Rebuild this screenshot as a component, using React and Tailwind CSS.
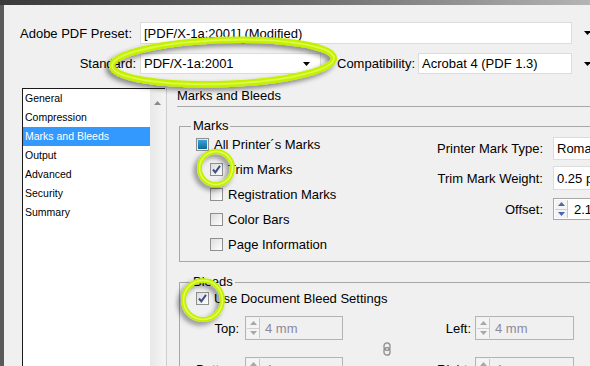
import React from "react";

const DownArrow = () => (
  <svg width="7" height="4" viewBox="0 0 7 4" className="shrink-0">
    <path d="M0 0h7L3.5 4z" fill="#000" />
  </svg>
);

const Check = ({ state }) => (
  <span className="flex h-[13px] w-[13px] shrink-0 items-center justify-center border border-[#8e8f8f] bg-gradient-to-br from-[#dcdcdc] to-white">
    {state === "checked" && (
      <svg width="11" height="11" viewBox="0 0 11 11">
        <path d="M2 5.5 L4.3 8.3 L9 1.8" fill="none" stroke="#3a4f86" strokeWidth="2" />
      </svg>
    )}
    {state === "mixed" && (
      <span className="h-[9px] w-[9px] bg-gradient-to-b from-[#3aa3d8] to-[#0f6a9c]" />
    )}
  </span>
);

const SpinButtons = ({ active }) => {
  const c = active ? "#4a66b0" : "#a8a8a8";
  return (
    <span className="flex h-full w-[13px] shrink-0 flex-col border-r border-[#c8c8c8] bg-[#f4f4f4]">
      <span className="flex flex-1 items-center justify-center border-b border-[#d0d0d0]">
        <svg width="7" height="4" viewBox="0 0 7 4">
          <path d="M0 4h7L3.5 0z" fill={c} />
        </svg>
      </span>
      <span className="flex flex-1 items-center justify-center">
        <svg width="7" height="4" viewBox="0 0 7 4">
          <path d="M0 0h7L3.5 4z" fill={c} />
        </svg>
      </span>
    </span>
  );
};

function BleedField({ label }) {
  return (
    <div className="flex h-[24px] items-center">
      <span className="w-[43px] text-right">{label}</span>
      <span className="ml-[6px] flex h-[24px] w-[98px] items-center border border-[#b4b4b4] bg-[#f0f0f0] p-px">
        <SpinButtons />
        <span className="pl-[5px] text-[#8a8a9c]">4 mm</span>
      </span>
    </div>
  );
}

function BleedFieldRight({ label }) {
  return (
    <div className="flex h-[24px] items-center">
      <span className="w-[48px] text-right">{label}</span>
      <span className="ml-[4px] flex h-[24px] w-[99px] items-center border border-[#b4b4b4] bg-[#f0f0f0] p-px">
        <SpinButtons />
        <span className="pl-[5px] text-[#8a8a9c]">4 mm</span>
      </span>
    </div>
  );
}

const SECTIONS = ["General", "Compression", "Marks and Bleeds", "Output", "Advanced", "Security", "Summary"];

export default function App() {
  return (
    <div className="relative h-[366px] w-[590px] overflow-hidden bg-[#f0f0f0] font-['Liberation_Sans',Arial,sans-serif] text-[13px] leading-[15px] text-black">
      <div className="h-[5px] bg-gradient-to-r from-[#3a3a3a] via-[#6a6a6a] to-[#b4b4b4]" />
      <div className="flex h-[361px]">
        <div className="w-[4px] shrink-0 bg-[#5a5a5a]" />
        <div className="flex min-w-0 flex-1 flex-col">
          {/* preset row */}
          <div className="mt-[17px] flex h-[22px] items-center">
            <span className="w-[132px] shrink-0 pl-[16px] text-left">Adobe PDF Preset:</span>
            <span className="ml-[4px] flex h-[22px] flex-1 items-center border border-[#dcdcdc] bg-white pl-[3px]">
              [PDF/X-1a:2001] (Modified)
            </span>
            <span className="ml-[12px] w-[6px]">
              <DownArrow />
            </span>
          </div>
          {/* standard row */}
          <div className="mt-[9px] flex h-[21px] items-center">
            <span className="w-[132px] shrink-0 text-right">Standard:</span>
            <span className="ml-[4px] flex h-[21px] w-[181px] shrink-0 items-center border border-[#dcdcdc] bg-white pl-[3px]">
              <span className="flex-1">PDF/X-1a:2001</span>
              <span className="mr-[10px]">
                <DownArrow />
              </span>
            </span>
            <span className="ml-[16px]">Compatibility:</span>
            <span className="ml-[3px] flex h-[21px] flex-1 items-center border border-[#dcdcdc] bg-white pl-[3px]">
              Acrobat 4 (PDF 1.3)
            </span>
            <span className="ml-[12px] w-[6px]">
              <DownArrow />
            </span>
          </div>

          {/* body */}
          <div className="mt-[14px] flex min-h-0 flex-1">
            {/* section list */}
            <div className="ml-[18px] flex w-[143px] shrink-0 border-l border-t border-[#1a1a1a]">
              <ul className="flex-1 bg-white text-[10.5px] leading-[19px]">
                {SECTIONS.map((s) => (
                  <li
                    key={s}
                    className={s === "Marks and Bleeds" ? "h-[19px] bg-[#3399ff] pl-[2px] text-white" : "h-[19px] pl-[2px]"}
                  >
                    {s}
                  </li>
                ))}
              </ul>
              <div className="flex w-[15px] justify-center bg-gradient-to-r from-[#e8e8e8] to-[#f4f4f4] pt-[12px]">
                <svg width="7" height="4" viewBox="0 0 7 4">
                  <path d="M0 4h7L3.5 0z" fill="#8a8a8a" />
                </svg>
              </div>
            </div>
            <div className="ml-px w-px shrink-0 bg-[#cfcfcf]" />

            {/* marks and bleeds panel */}
            <div className="w-[440px] shrink-0 pl-[10px]">
              <div className="h-[19px] border-b border-[#a8a8a8]">Marks and Bleeds</div>

              <fieldset className="ml-[2px] mt-[13px] border border-[#a8a8a8] pb-[4px]">
                <legend className="ml-[11px] px-[2px] leading-[12px]">Marks</legend>
                <div className="flex">
                  <div className="w-[237px] shrink-0 pl-[16px]">
                    <div className="flex h-[25px] items-center gap-[5px]">
                      <Check state="mixed" />
                      <span>All Printer´s Marks</span>
                    </div>
                    {[
                      ["Trim Marks", "checked"],
                      ["Registration Marks"],
                      ["Color Bars"],
                      ["Page Information"],
                    ].map(([t, st]) => (
                      <div key={t} className="flex h-[25px] items-center gap-[5px] pl-[14px]">
                        <Check state={st} />
                        <span>{t}</span>
                      </div>
                    ))}
                  </div>
                  <div className="mt-[5px] flex shrink-0 flex-col">
                    <div className="flex h-[23px] items-center">
                      <span className="w-[126px] whitespace-nowrap text-right">Printer Mark Type:</span>
                      <span className="ml-[10px] flex h-[23px] w-[100px] items-center border border-[#dcdcdc] bg-white pl-[3px]">
                        Roman
                      </span>
                    </div>
                    <div className="mt-[6px] flex h-[24px] items-center">
                      <span className="w-[126px] whitespace-nowrap text-right">Trim Mark Weight:</span>
                      <span className="ml-[10px] flex h-[24px] w-[100px] items-center border border-[#dcdcdc] bg-white pl-[3px]">
                        0.25 pt
                      </span>
                    </div>
                    <div className="mt-[8px] flex h-[22px] items-center">
                      <span className="w-[126px] text-right">Offset:</span>
                      <span className="ml-[10px] flex h-[22px] w-[100px] items-center border border-[#a8a8a8] bg-white p-px">
                        <SpinButtons active />
                        <span className="pl-[6px]">2.117 mm</span>
                      </span>
                    </div>
                  </div>
                </div>
              </fieldset>

              <fieldset className="ml-[2px] mt-[14px] border border-[#a8a8a8] pb-[20px]">
                <legend className="ml-[11px] px-[2px] leading-[12px]">Bleeds</legend>
                <div className="pl-[16px]">
                  <div className="flex h-[21px] items-center gap-[5px]">
                    <Check state="checked" />
                    <span>Use Document Bleed Settings</span>
                  </div>
                  <div className="mt-[7px] flex">
                    <div className="flex flex-col gap-[17px]">
                      <BleedField label="Top:" />
                      <BleedField label="Bottom:" />
                    </div>
                    <div className="flex w-[80px] shrink-0 items-center pl-[40px]">
                      <svg width="8" height="14" viewBox="0 0 8 14">
                        <rect x="1" y="0.8" width="6" height="7.5" rx="3" fill="none" stroke="#8c8c8c" strokeWidth="1.3" />
                        <rect x="1" y="5.7" width="6" height="7.5" rx="3" fill="none" stroke="#8c8c8c" strokeWidth="1.3" />
                      </svg>
                    </div>
                    <div className="flex flex-col gap-[17px]">
                      <BleedFieldRight label="Left:" />
                      <BleedFieldRight label="Right:" />
                    </div>
                  </div>
                </div>
              </fieldset>
            </div>
          </div>
        </div>
      </div>

      {/* highlight rings drawn over the dialog */}
      <svg className="pointer-events-none absolute left-0 top-0" width="590" height="366">
        <defs>
          <filter id="ringShadow" x="-30%" y="-60%" width="160%" height="220%">
            <feDropShadow dx="-3" dy="3" stdDeviation="2.5" floodColor="#000" floodOpacity="0.45" />
          </filter>
        </defs>
        <g filter="url(#ringShadow)" fill="none" stroke="#c4ef00" strokeWidth="6.5">
          <ellipse cx="223" cy="62" rx="111" ry="22" transform="rotate(-2 223 62)" />
          <circle cx="216" cy="168" r="16.5" strokeWidth="5" />
          <circle cx="203" cy="300" r="19.5" strokeWidth="5" />
        </g>
        <g fill="none" stroke="#e2ff5a" strokeWidth="1.5">
          <ellipse cx="223" cy="62" rx="111" ry="22" transform="rotate(-2 223 62)" />
          <circle cx="216" cy="168" r="16.5" />
          <circle cx="203" cy="300" r="19.5" />
        </g>
      </svg>
    </div>
  );
}
